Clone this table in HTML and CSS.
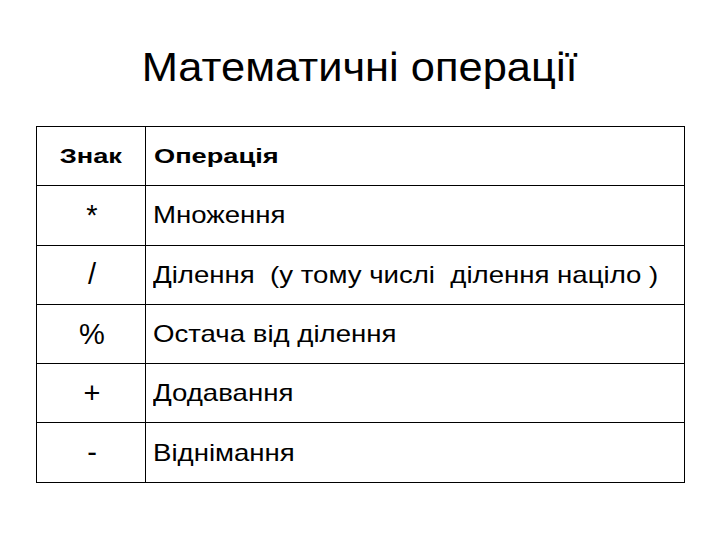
FILE: index.html
```html
<!DOCTYPE html>
<html lang="uk">
<head>
<meta charset="utf-8">
<link rel="stylesheet" href="styles.css">
</head>
<body>
<h1 class="title"><span class="title-text">Математичні операції</span></h1>
<table class="ops">
  <colgroup><col class="c-sign"><col class="c-op"></colgroup>
  <tr class="head">
    <th class="sign"><span class="wide">Знак</span></th>
    <th class="op"><span class="wide wide-left">Операція</span></th>
  </tr>
  <tr><td class="sign">*</td><td class="op"><span class="stretch">Множення</span></td></tr>
  <tr><td class="sign">/</td><td class="op"><span class="stretch">Ділення  (у тому числі  ділення націло )</span></td></tr>
  <tr><td class="sign">%</td><td class="op"><span class="stretch">Остача від ділення</span></td></tr>
  <tr><td class="sign">+</td><td class="op"><span class="stretch">Додавання</span></td></tr>
  <tr><td class="sign">-</td><td class="op"><span class="stretch">Віднімання</span></td></tr>
</table>
</body>
</html>
```
FILE: styles.css
```css
html, body {
  margin: 0;
  padding: 0;
  background: #ffffff;
  color: #000000;
  font-family: "Liberation Sans", Arial, sans-serif;
}

.title {
  margin: 0;
  padding-top: 47px;
  font-size: 41px;
  line-height: 41px;
  font-weight: normal;
  text-align: center;
}

.title-text {
  display: inline-block;
  transform: scaleX(1.06);
  transform-origin: center;
}

.ops {
  margin: 38px 0 0 36px;
  width: 649px;
  border-collapse: collapse;
  table-layout: fixed;
}

.c-sign { width: 109px; }

.ops th,
.ops td {
  border: 1.5px solid #000000;
  height: 58.3px;
  padding: 0;
  vertical-align: middle;
}

.ops th {
  font-size: 20px;
  font-weight: bold;
}

.ops th.sign { text-align: center; }
.ops th.op { text-align: left; padding-left: 8px; }

.wide {
  display: inline-block;
  transform: scaleX(1.36);
  transform-origin: center;
}

.wide-left { transform-origin: left center; }

.ops td.sign {
  text-align: center;
  font-size: 29px;
  padding-left: 2px;
}

.ops td.op {
  font-size: 24px;
  padding-left: 7px;
  white-space: pre;
}

.stretch {
  display: inline-block;
  transform: scaleX(1.15);
  transform-origin: left center;
}
```
